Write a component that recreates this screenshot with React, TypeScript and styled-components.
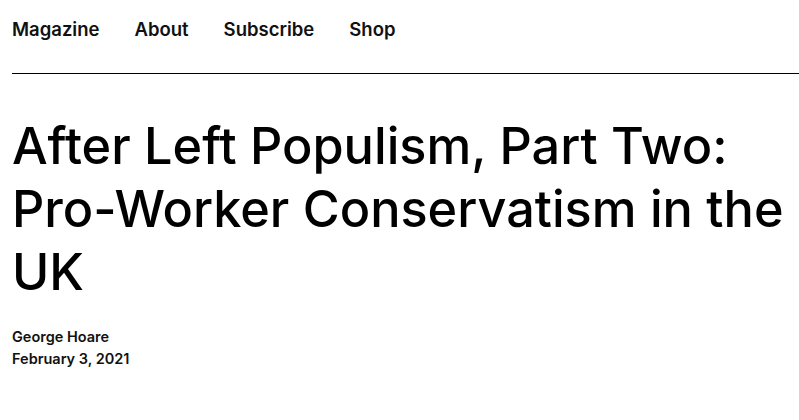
import styled, { createGlobalStyle } from 'styled-components';

const GlobalStyle = createGlobalStyle`
  html, body {
    margin: 0;
    padding: 0;
    background: #fff;
    color: #000;
    font-family: Inter, 'Noto Sans', sans-serif;
  }
`;

const Page = styled.div`
  padding: 0 0 0 12px;
`;

const Nav = styled.nav`
  display: flex;
  gap: 35px;
  height: 74px;
  padding-top: 17px;
  box-sizing: border-box;
  border-bottom: 1.5px solid #000;
`;

const NavLink = styled.a`
  font-size: 18.5px;
  font-weight: 600;
  line-height: 24px;
  color: #111;
  text-decoration: none;
`;

const Article = styled.article`
  padding-top: 40px;
  padding-right: 12px;
`;

const Title = styled.h1`
  margin: 0;
  font-size: 50.4px;
  font-weight: 500;
  line-height: 63px;
  color: #000;
`;

const Meta = styled.div`
  display: flex;
  flex-direction: column;
  margin-top: 23px;
  font-size: 14.5px;
  font-weight: 600;
  line-height: 22px;
  color: #111;
`;

export default function App() {
  return (
    <Page>
      <GlobalStyle />
      <Nav>
        <NavLink href="#">Magazine</NavLink>
        <NavLink href="#">About</NavLink>
        <NavLink href="#">Subscribe</NavLink>
        <NavLink href="#">Shop</NavLink>
      </Nav>
      <Article>
        <Title>After Left Populism, Part Two: Pro-Worker Conservatism in the UK</Title>
        <Meta>
          <span>George Hoare</span>
          <span>February 3, 2021</span>
        </Meta>
      </Article>
    </Page>
  );
}
